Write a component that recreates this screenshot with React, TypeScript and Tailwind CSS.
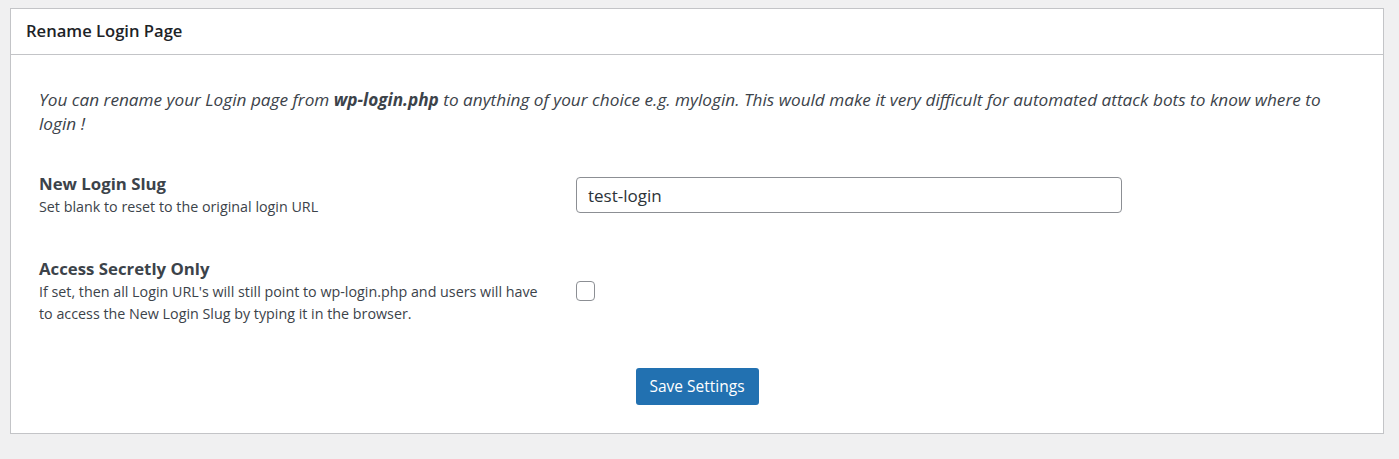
import React from "react";

export default function App() {
  return (
    <div
      className="w-[1399px] h-[459px] bg-[#f0f0f1] pt-[8px] pl-[10px] overflow-hidden"
      style={{ fontFamily: '"Open Sans", "Noto Sans", sans-serif' }}
    >
      <div className="w-[1374px] border border-[#c3c4c7] bg-white">
        <div className="h-[46px] border-b border-[#c3c4c7] px-[15px] flex items-center">
          <h3 className="text-[16.6px] font-semibold text-[#1d2327] leading-none">Rename Login Page</h3>
        </div>
        <div className="pt-[33px] px-[28px] pb-[28px]">
          <p className="italic text-[17.2px] leading-[24px] text-[#3c434a] w-[1300px]">
            You can rename your Login page from <b className="font-bold">wp-login.php</b> to anything of your choice e.g.
            mylogin. This would make it very difficult for automated attack bots to know where to login !
          </p>

          <div className="mt-[36px] flex items-center">
            <div className="w-[537px]">
              <div className="text-[16.8px] font-bold leading-[24px] text-[#3c434a]">New Login Slug</div>
              <div className="text-[14.3px] leading-[22px] text-[#3c434a]">Set blank to reset to the original login URL</div>
            </div>
            <input
              type="text"
              defaultValue="test-login"
              className="w-[546px] h-[36px] border border-[#8c8f94] rounded-[4px] px-[11px] text-[17px] text-[#2c3338] outline-none"
              style={{ fontFamily: '"Open Sans", "Noto Sans", sans-serif' }}
            />
          </div>

          <div className="mt-[39px] flex items-center">
            <div className="w-[537px]">
              <div className="text-[16.8px] font-bold leading-[24px] text-[#3c434a]">Access Secretly Only</div>
              <div className="text-[14.3px] leading-[22px] text-[#3c434a]">
                If set, then all Login URL's will still point to wp-login.php and users will have
                <br />
                to access the New Login Slug by typing it in the browser.
              </div>
            </div>
            <span className="block w-[19px] h-[20px] border border-[#8c8f94] rounded-[4px] bg-white" />
          </div>

          <div className="mt-[43px] flex justify-center">
            <button className="h-[37px] w-[123px] bg-[#2271b1] text-white text-[15.5px] rounded-[3px] leading-none">
              Save Settings
            </button>
          </div>
        </div>
      </div>
    </div>
  );
}
